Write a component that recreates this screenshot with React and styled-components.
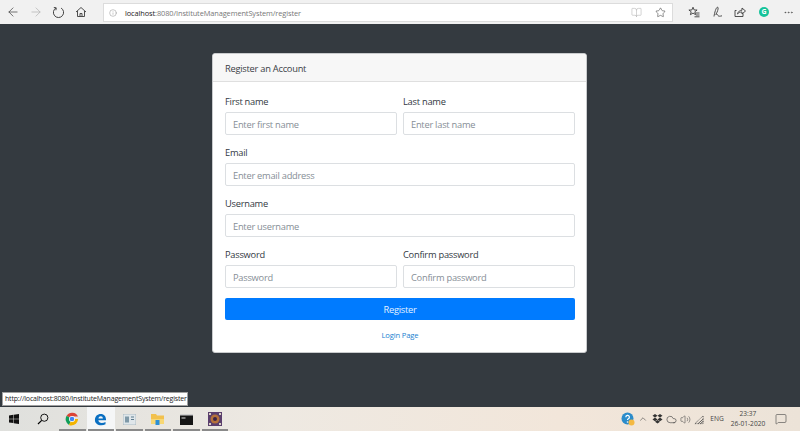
import React from "react";
import styled, { createGlobalStyle } from "styled-components";
import { ArrowLeft, ArrowRight, Info, BookOpen, Star, ChevronUp, Cloud, Volume2, MessageSquare, MoreHorizontal } from "lucide-react";

const GlobalStyle = createGlobalStyle`
  html, body { margin: 0; padding: 0; height: 100%; }
  body { font-family: "Open Sans", "Noto Sans", sans-serif; overflow: hidden; }
  * { box-sizing: border-box; }
`;

const Screen = styled.div`
  position: relative;
  width: 800px;
  height: 431px;
  display: flex;
  flex-direction: column;
  background: #343a40;
`;

const Toolbar = styled.div`
  height: 24px;
  flex: none;
  display: flex;
  align-items: center;
  background: #f1f1f1;
  color: #3c3c3c;
`;

const NavButton = styled.div`
  width: 24px;
  height: 24px;
  flex: none;
  display: flex;
  align-items: center;
  justify-content: center;
  margin-left: ${(p) => p.$ml || 0}px;
  color: ${(p) => (p.$dim ? "#b0b0b0" : "#3c3c3c")};
`;

const AddressBar = styled.div`
  width: 570px;
  height: 19px;
  margin-left: 10px;
  margin-top: 1px;
  flex: none;
  display: flex;
  align-items: center;
  padding-left: 5px;
  background: #fff;
  border: 1px solid #dcdcdc;
  font-size: 7.4px;
  letter-spacing: -0.1px;
  color: #777;
`;

const Host = styled.span`
  color: #222;
  margin-left: 8px;
`;

const Spacer = styled.div`
  flex: 1;
`;

const GrammarlyDot = styled.div`
  width: 10px;
  height: 10px;
  border-radius: 50%;
  background: #15c39a;
  color: #fff;
  font-size: 7px;
  font-weight: 700;
  line-height: 10px;
  text-align: center;
`;

const Page = styled.main`
  flex: 1;
  padding: 29px 1px 0 0;
  display: flex;
  justify-content: center;
  align-items: flex-start;
`;

const Card = styled.section`
  width: 375px;
  height: 300px;
  background: #fff;
  border: 1px solid #c9cbcd;
  border-radius: 3px;
  overflow: hidden;
`;

const CardHeader = styled.header`
  height: 28px;
  padding: 1px 0 0 12px;
  display: flex;
  align-items: center;
  font-size: 9.3px;
  letter-spacing: -0.25px;
  color: #3a4046;
  background: #f7f7f7;
  border-bottom: 1px solid #dfdfdf;
`;

const CardBody = styled.form`
  padding: 12px 11px 0 12px;
`;

const Row = styled.div`
  display: flex;
  gap: 6px;
  margin-bottom: 10px;
`;

const Field = styled.label`
  flex: 1;
  display: block;
`;

const LabelText = styled.span`
  display: block;
  height: 15px;
  line-height: 15px;
  margin-bottom: 3px;
  font-size: 9.3px;
  letter-spacing: -0.25px;
  color: #33393f;
`;

const Input = styled.input`
  display: block;
  width: 100%;
  height: 23px;
  padding: 1px 7px 0;
  font-family: inherit;
  font-size: 9.3px;
  letter-spacing: -0.25px;
  background: #fff;
  border: 1px solid #dcdfe2;
  border-radius: 2px;
  outline: none;
  &::placeholder { color: #868e96; opacity: 1; }
`;

const SubmitButton = styled.button`
  display: block;
  width: 100%;
  height: 22px;
  padding: 0;
  border: 0;
  border-radius: 2px;
  background: #007bff;
  color: #e4f1ff;
  font-family: inherit;
  font-size: 9.3px;
  letter-spacing: -0.25px;
`;

const LoginLink = styled.a`
  display: block;
  margin-top: 9px;
  text-align: center;
  line-height: 12px;
  font-size: 7.6px;
  letter-spacing: -0.15px;
  color: #1a7fd0;
`;

const StatusTip = styled.div`
  position: absolute;
  left: 2px;
  top: 392px;
  width: 186px;
  height: 14px;
  padding-left: 2px;
  line-height: 12px;
  font-size: 7px;
  letter-spacing: -0.18px;
  color: #222;
  background: #fff;
  border: 1px solid #a0a0a0;
  white-space: nowrap;
`;

const Taskbar = styled.footer`
  height: 24px;
  flex: none;
  display: flex;
  align-items: center;
  background: linear-gradient(90deg, #dfe0dd 0%, #eee9e2 35%, #f2e6da 70%, #ece3d8 100%);
`;

const TaskSlot = styled.div`
  position: relative;
  width: ${(p) => p.$w || 28.5}px;
  height: 24px;
  flex: none;
  display: flex;
  align-items: center;
  justify-content: center;
  background: ${(p) => (p.$active ? "#f5f6f7" : "transparent")};
  ${(p) => p.$open && `
    &::after {
      content: "";
      position: absolute;
      left: 1px;
      right: 1px;
      bottom: 0;
      height: 2px;
      background: #8a8a8a;
    }
  `}
`;

const Tray = styled.div`
  margin-left: auto;
  padding-right: 6px;
  display: flex;
  align-items: center;
  color: #444;
`;

const TrayIcon = styled.div`
  width: ${(p) => p.$w || 14}px;
  height: 24px;
  display: flex;
  align-items: center;
  justify-content: center;
`;

const TrayText = styled.div`
  font-size: 6.6px;
  line-height: 10px;
  color: #444;
  text-align: center;
  width: ${(p) => p.$w}px;
`;

const Stroke = ({ size = 12, children }) => (
  <svg width={size} height={size} viewBox="0 0 12 12" fill="none" stroke="currentColor" strokeWidth="0.9">
    {children}
  </svg>
);

const RefreshIcon = () => (
  <Stroke size={13}>
    <path d="M3.600 1.900A4.700 4.700 0 1 0 8.400 1.900" />
    <path d="M1.700 1.400 3.900 1.700 3.600 3.900" />
  </Stroke>
);

const HomeIcon = () => (
  <Stroke size={12}>
    <path d="M1 6 6 1.500 11 6" />
    <path d="M2.500 5v5.500h7V5" />
    <path d="M5 10.500V7.500h2v3" />
  </Stroke>
);

const HubIcon = () => (
  <Stroke size={12}>
    <path d="M5 1.200 6.200 4h2.900L6.800 5.800l.8 2.900L5 7.100 2.400 8.700l.8-2.900L.9 4h2.900z" />
    <path d="M7.500 7h4M8 9h3.500M6.500 10.800h5" />
  </Stroke>
);

const InkIcon = () => (
  <Stroke size={12}>
    <path d="M3 10.500C3.500 7 5 1.200 6.500 1.200 8 1.200 6.500 6 4.800 8.500 5.500 8 6.500 8 7 9.500c.5 1 2 .8 4 .3" />
  </Stroke>
);

const ShareIcon = () => (
  <Stroke size={12}>
    <path d="M2.500 4.500H1V10.500h8V7.500" />
    <path d="M3.500 8C4 5.500 6 4.200 8 4.200V2l3.500 3L8 8V6C6 6 4.800 6.500 3.500 8z" />
  </Stroke>
);

const TaskSearchIcon = () => (
  <Stroke size={12}>
    <circle cx="7.300" cy="4.700" r="3.600" />
    <path d="M4.700 7.300 1 11" strokeWidth="1.200" />
  </Stroke>
);

const WindowsLogo = () => (
  <svg width="10" height="10" viewBox="0 0 10 10" fill="#111">
    <path d="M0 1.400 4.300.8v3.900H0zM4.800.7 10 0v4.700H4.800zM0 5.200h4.300v3.900L0 8.600zM4.800 5.200H10V10l-5.200-.7z" />
  </svg>
);

const ChromeLogo = () => (
  <svg width="14" height="14" viewBox="0 0 14 14">
    <path d="M7 7 1.600 3.800A6.500 6.500 0 0 1 13 4.500H7z" fill="#db4437" />
    <path d="M7 7 4 12.900A6.500 6.500 0 0 1 1.600 3.800z" fill="#0f9d58" />
    <path d="M7 7h6a6.500 6.500 0 0 1-9 5.900z" fill="#f4b400" />
    <circle cx="7" cy="7" r="3" fill="#fff" />
    <circle cx="7" cy="7" r="2.300" fill="#4285f4" />
  </svg>
);

const EdgeLogo = () => (
  <svg width="13" height="13" viewBox="0 0 14 14">
    <path d="M1 7.500C1 3.400 3.700 1 7.200 1 11 1 13 3.600 13 7.800H4.700c.2 2 1.700 3 3.600 3 1.500 0 2.900-.4 4.100-1.200v2.600c-1.300.7-2.800 1-4.400 1C3.800 13.200 1 11 1 7.500zM4.800 5.800h4.800C9.500 4.400 8.600 3.500 7.300 3.500 6 3.500 5 4.400 4.800 5.800z" fill="#0a6fc2" />
  </svg>
);

const ReaderThumb = () => (
  <svg width="13" height="11" viewBox="0 0 13 11">
    <rect width="13" height="11" fill="#dfe6ea" stroke="#8ea0ac" strokeWidth=".6" />
    <rect x="2" y="2.500" width="4" height="6" fill="#7f99a8" />
    <rect x="8" y="2.500" width="3" height="1" fill="#5c7a8c" />
    <rect x="8" y="5" width="3" height="1" fill="#5c7a8c" />
  </svg>
);

const FolderIcon = () => (
  <svg width="13" height="12" viewBox="0 0 13 12">
    <path d="M0 1h5l1 1.500h7V11H0z" fill="#f2c14e" />
    <rect y="6" width="13" height="5" fill="#f7d774" />
    <rect x="4.500" y="7" width="4" height="5" fill="#2d8fd5" />
  </svg>
);

const ConsoleIcon = () => (
  <svg width="13" height="11" viewBox="0 0 13 11">
    <rect width="13" height="11" fill="#151515" />
    <rect width="13" height="1.500" fill="#cfcfcf" />
    <rect x="1.500" y="3.500" width="4" height="1" fill="#ddd" />
  </svg>
);

const CrestIcon = () => (
  <svg width="14" height="14" viewBox="0 0 14 14">
    <rect width="14" height="14" fill="#5b3f6d" />
    <circle cx="7" cy="7" r="4.500" fill="#b5713a" />
    <circle cx="7" cy="7" r="2" fill="#3b2448" />
    <path d="M1 1h2v2H1zM11 1h2v2h-2zM1 11h2v2H1zM11 11h2v2h-2z" fill="#d8d0c4" />
  </svg>
);

const HelpBadge = () => (
  <svg width="14" height="14" viewBox="0 0 14 14">
    <circle cx="6.500" cy="6.500" r="6" fill="#2b8ccb" />
    <path d="M4.800 5.200a1.800 1.800 0 1 1 2.600 1.600c-.6.300-.9.700-.9 1.300" fill="none" stroke="#fff" strokeWidth="1.200" />
    <circle cx="6.500" cy="10" r=".8" fill="#fff" />
    <circle cx="10.500" cy="10.500" r="3" fill="#f4b942" />
  </svg>
);

const DropboxIcon = () => (
  <svg width="11" height="10" viewBox="0 0 11 10" fill="#333">
    <path d="M3 0 5.500 1.800 3 3.600.5 1.800zM8 0l2.500 1.800L8 3.600 5.500 1.800zM3 3.600 5.500 5.400 3 7.200.5 5.400zM8 3.600l2.500 1.800L8 7.200 5.500 5.400zM3 7.800l2.500-1.700L8 7.800 5.500 9.500z" />
  </svg>
);

const NetworkIcon = () => (
  <Stroke size={11}>
    <path d="M1 10.500 10 2v8.500z" strokeDasharray="1 .8" />
    <path d="M4.500 10.500 10 5.500" />
    <path d="M7 10.500 10 8" />
  </Stroke>
);

const fields = [
  [["First name", "Enter first name"], ["Last name", "Enter last name"]],
  [["Email", "Enter email address"]],
  [["Username", "Enter username"]],
  [["Password", "Password"], ["Confirm password", "Confirm password"]],
];

const apps = [
  { id: "chrome", icon: <ChromeLogo /> },
  { id: "edge", icon: <EdgeLogo />, active: true },
  { id: "reader", icon: <ReaderThumb /> },
  { id: "folder", icon: <FolderIcon /> },
  { id: "console", icon: <ConsoleIcon /> },
  { id: "crest", icon: <CrestIcon /> },
];

export default function App() {
  return (
    <Screen>
      <GlobalStyle />
      <Toolbar>
        <NavButton $ml={1}><ArrowLeft size={14} strokeWidth={1.2} /></NavButton>
        <NavButton $ml={-1} $dim><ArrowRight size={14} strokeWidth={1.2} /></NavButton>
        <NavButton $ml={-2}><RefreshIcon /></NavButton>
        <NavButton $ml={-1}><HomeIcon /></NavButton>
        <AddressBar>
          <Info size={8} strokeWidth={1.2} color="#777" />
          <Host>localhost</Host>:8080/InstituteManagementSystem/register
          <Spacer />
          <NavButton $dim><BookOpen size={11} strokeWidth={1.2} /></NavButton>
          <NavButton><Star size={11} strokeWidth={1.2} /></NavButton>
        </AddressBar>
        <NavButton $ml={9}><HubIcon /></NavButton>
        <NavButton $ml={-1}><InkIcon /></NavButton>
        <NavButton $ml={-1}><ShareIcon /></NavButton>
        <NavButton><GrammarlyDot>G</GrammarlyDot></NavButton>
        <NavButton><MoreHorizontal size={11} strokeWidth={1.2} /></NavButton>
      </Toolbar>
      <Page>
        <Card>
          <CardHeader>Register an Account</CardHeader>
          <CardBody>
            {fields.map((row, i) => (
              <Row key={i}>
                {row.map(([label, placeholder]) => (
                  <Field key={label}>
                    <LabelText>{label}</LabelText>
                    <Input placeholder={placeholder} readOnly />
                  </Field>
                ))}
              </Row>
            ))}
            <SubmitButton type="button">Register</SubmitButton>
            <LoginLink>Login Page</LoginLink>
          </CardBody>
        </Card>
      </Page>
      <StatusTip>http://localhost:8080/InstituteManagementSystem/register</StatusTip>
      <Taskbar>
        <TaskSlot $w={28}><WindowsLogo /></TaskSlot>
        <TaskSlot $w={30}><TaskSearchIcon /></TaskSlot>
        {apps.map((app) => (
          <TaskSlot key={app.id} $open $active={app.active}>{app.icon}</TaskSlot>
        ))}
        <Tray>
          <TrayIcon $w={16}><HelpBadge /></TrayIcon>
          <TrayIcon><ChevronUp size={10} strokeWidth={1.4} /></TrayIcon>
          <TrayIcon><DropboxIcon /></TrayIcon>
          <TrayIcon><Cloud size={11} strokeWidth={1.4} /></TrayIcon>
          <TrayIcon><Volume2 size={11} strokeWidth={1.2} /></TrayIcon>
          <TrayIcon><NetworkIcon /></TrayIcon>
          <TrayText $w={22}>ENG</TrayText>
          <TrayText $w={40}>23:37<br />26-01-2020</TrayText>
          <TrayIcon $w={26}><MessageSquare size={12} strokeWidth={1.2} /></TrayIcon>
        </Tray>
      </Taskbar>
    </Screen>
  );
}
